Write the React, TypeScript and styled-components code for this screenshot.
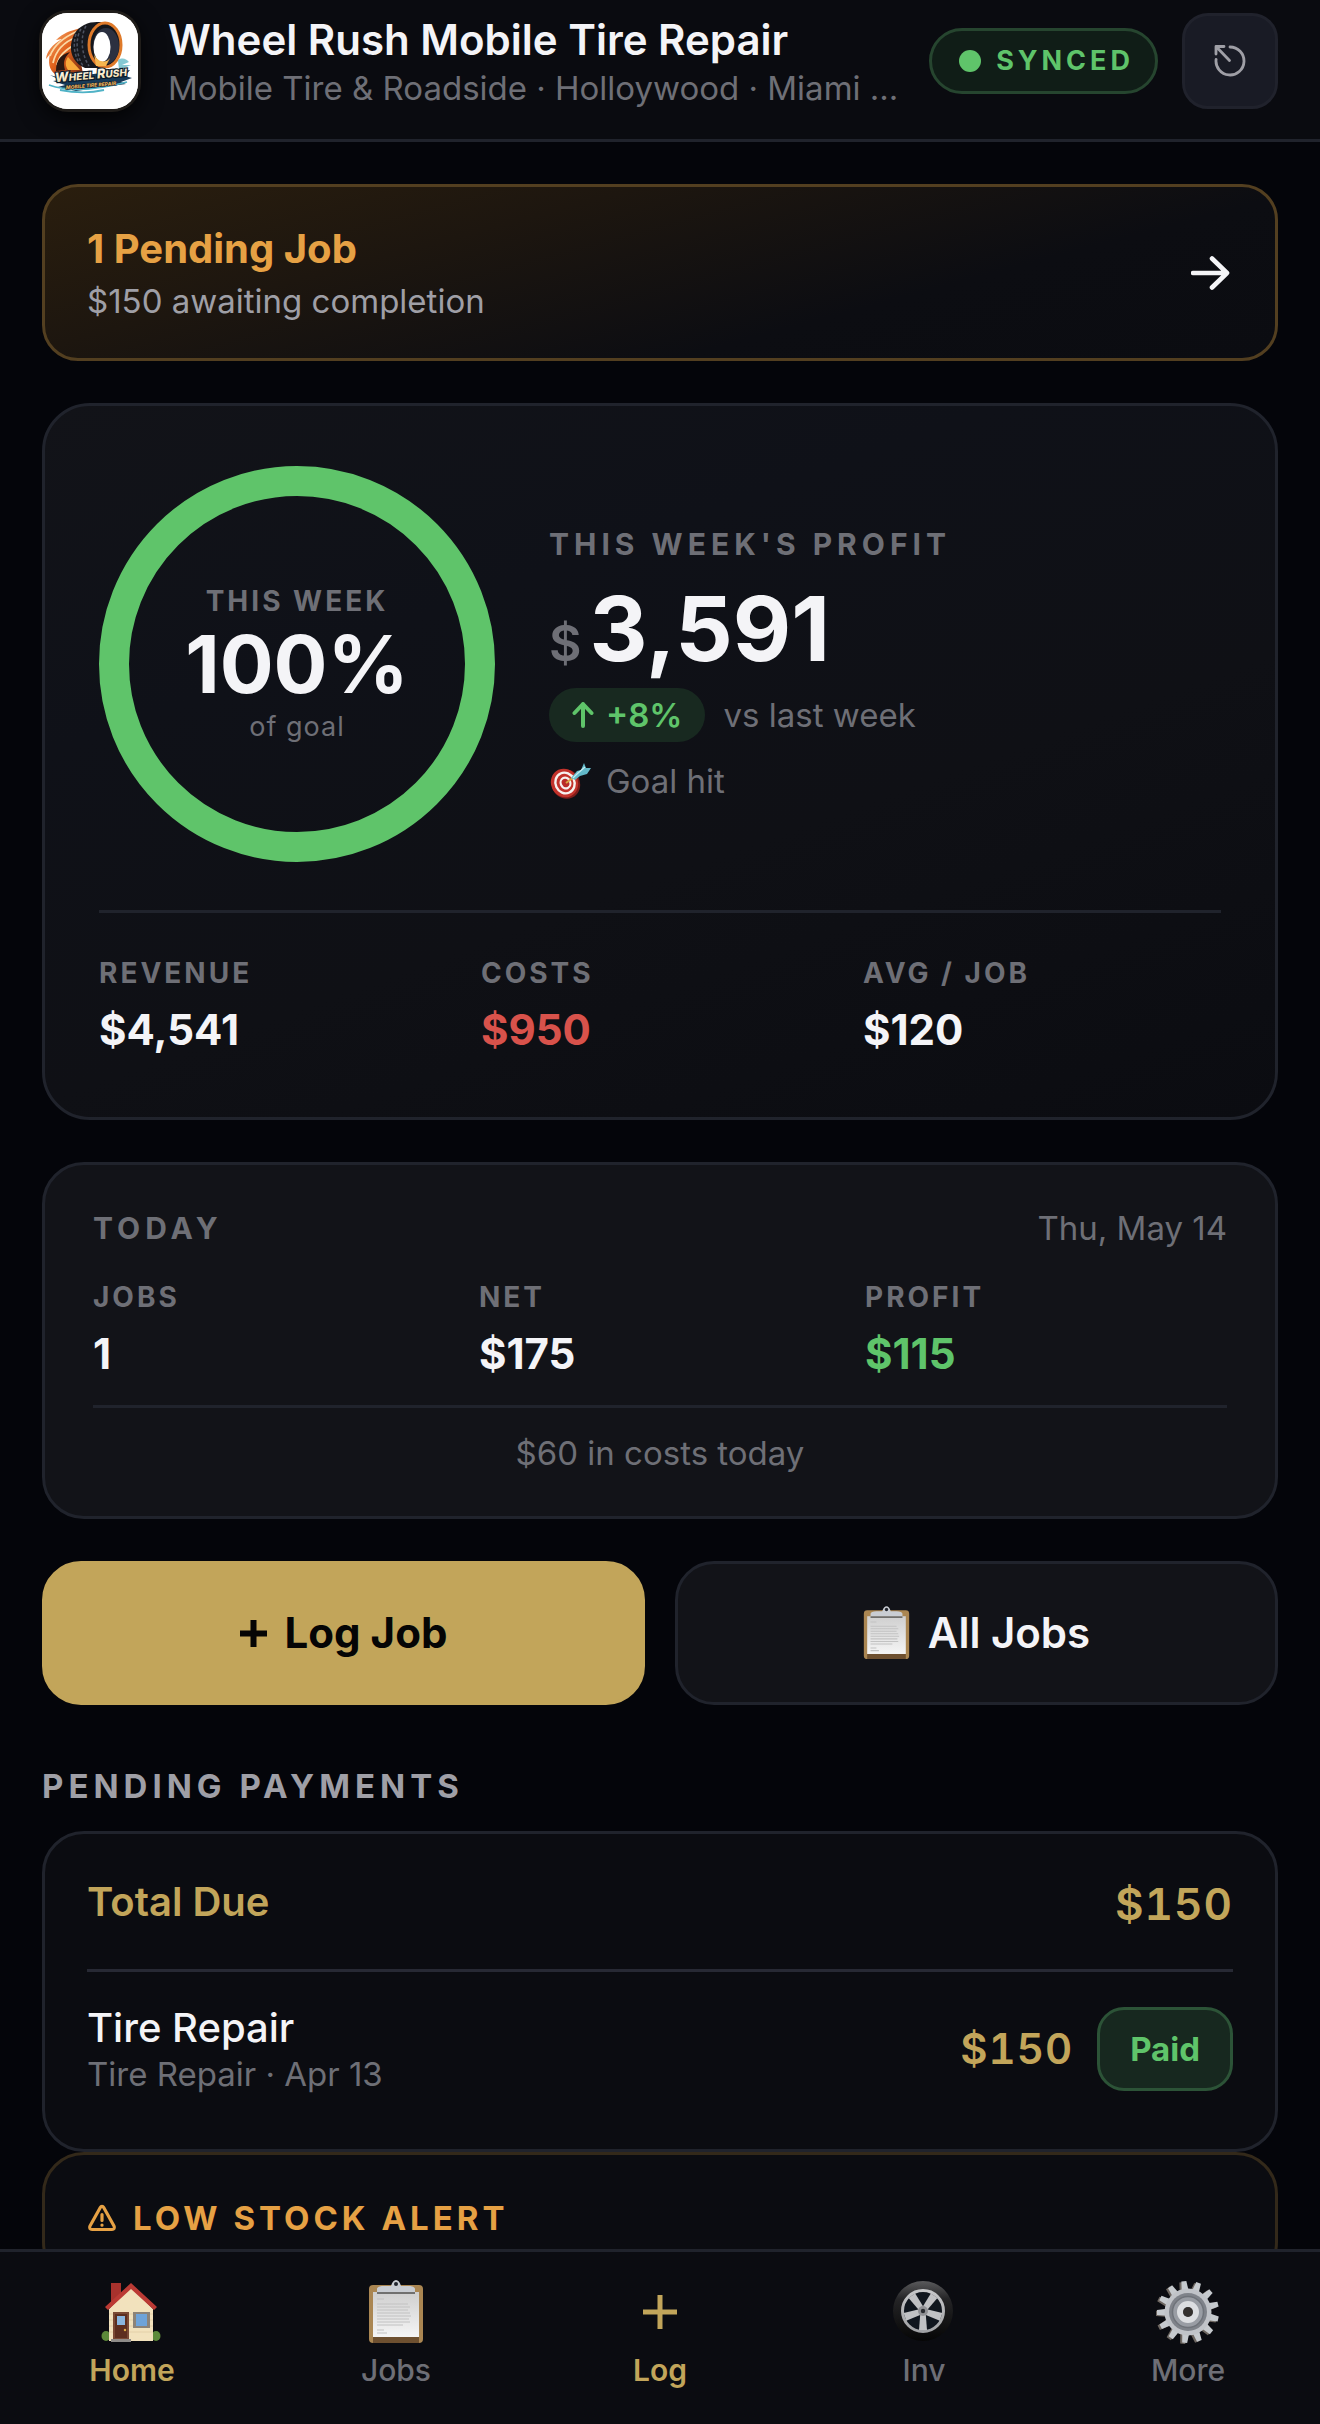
import React from 'react';
import styled, { createGlobalStyle } from 'styled-components';

const c = {
  page: '#04050a',
  bar: '#0a0b10',
  card: '#0b0c11',
  raised: '#121318',
  line: '#20232c',
  text: '#f4f4f7',
  soft: '#9f9fa6',
  muted: '#6e6f76',
  gold: '#c2a55a',
  orange: '#e6a144',
  green: '#5fc46a',
  red: '#d8524b',
};

const GlobalStyle = createGlobalStyle`
  *, *::before, *::after { box-sizing: border-box; }
  body {
    margin: 0;
    background: ${c.page};
    color: ${c.text};
    font-family: Inter, "Liberation Sans", sans-serif;
    font-size: 33px;
    line-height: 42px;
  }
  h1, h2, p, dl, dt, dd, ul { margin: 0; padding: 0; font: inherit; }
  button { font: inherit; color: inherit; cursor: pointer; margin: 0; }
  a { color: inherit; text-decoration: none; }
  svg { display: block; flex: none; }
`;

const Shell = styled.div`
  display: flex;
  flex-direction: column;
  height: 100vh;
`;

const Header = styled.header`
  display: flex;
  align-items: center;
  gap: 24px;
  padding: 13px 42px 30px;
  background: ${c.bar};
  border-bottom: 3px solid ${c.line};
`;

const LogoFrame = styled.div`
  width: 96px;
  height: 96px;
  margin-right: 6px;
  flex: none;
  border-radius: 26px;
  overflow: hidden;
  background: #fff;
  box-shadow: 0 0 0 3px #201d1a, 0 6px 24px #000;
`;

const Brand = styled.div`
  flex: 1;
  min-width: 0;
`;

const BrandName = styled.h1`
  font-size: 42px;
  line-height: 54px;
  font-weight: 600;
  white-space: nowrap;
`;

const BrandMeta = styled.p`
  color: ${c.muted};
  white-space: nowrap;
`;

const SyncPill = styled.div`
  display: flex;
  align-items: center;
  gap: 15px;
  height: 66px;
  padding: 0 21px 0 27px;
  border: 3px solid #26452f;
  border-radius: 33px;
  background: #101d17;
  color: ${c.green};
  font-size: 27px;
  line-height: 36px;
  font-weight: 700;
  letter-spacing: 4px;
`;

const Dot = styled.span`
  width: 22px;
  height: 22px;
  border-radius: 50%;
  background: ${c.green};
`;

const IconButton = styled.button`
  display: grid;
  place-items: center;
  width: 96px;
  height: 96px;
  padding: 0;
  border: 3px solid #20222c;
  border-radius: 26px;
  background: #191b25;
  color: ${c.soft};
`;

const Main = styled.main`
  flex: 1;
  min-height: 0;
  overflow-y: auto;
  scrollbar-width: none;
  display: flex;
  flex-direction: column;
  gap: 42px;
  padding: 42px;
  & > * { flex: none; }
`;

const PendingBanner = styled.a`
  display: flex;
  align-items: center;
  justify-content: space-between;
  padding: 36px 42px;
  border: 3px solid #533f20;
  border-radius: 36px;
  background: linear-gradient(165deg, #2a1e0e 0%, #1d160f 32%, #0c0d12 68%, #0b0c11 100%);
`;

const BannerTitle = styled.p`
  margin-bottom: 6px;
  color: ${c.orange};
  font-size: 40px;
  line-height: 51px;
  font-weight: 700;
`;

const BannerNote = styled.p`
  color: ${c.soft};
`;

const Card = styled.section<{ $tone?: 'raised' | 'hero' | 'alert' }>`
  border: 3px solid ${(p) => (p.$tone === 'alert' ? '#33291a' : c.line)};
  border-radius: ${(p) => (p.$tone === 'hero' ? 48 : 42)}px;
  padding: ${(p) =>
    p.$tone === 'hero' ? '60px 54px' : p.$tone === 'raised' ? '42px 48px' : p.$tone === 'alert' ? '42px' : '24px 42px'};
  background: ${(p) =>
    p.$tone === 'hero'
      ? 'linear-gradient(160deg, #121318 0%, #0f1118 30%, #0f1015 60%, #0b0c11 100%)'
      : p.$tone === 'raised'
        ? c.raised
        : c.card};
`;

const HeroTop = styled.div`
  display: flex;
  align-items: center;
  gap: 54px;
`;

const Ring = styled.div`
  display: flex;
  flex-direction: column;
  align-items: center;
  justify-content: center;
  width: 396px;
  height: 396px;
  flex: none;
  border: 30px solid ${c.green};
  border-radius: 50%;
`;

const Label = styled.dt`
  color: ${c.muted};
  font-size: 28px;
  line-height: 36px;
  font-weight: 700;
  letter-spacing: 3px;
`;

const RingLabel = styled(Label).attrs({ as: 'p' })``;

const RingValue = styled.p`
  font-size: 80px;
  line-height: 90px;
  font-weight: 700;
`;

const RingNote = styled.p`
  color: ${c.muted};
  font-size: 27px;
  line-height: 36px;
  letter-spacing: 1px;
`;

const Heading = styled.h2<{ $tone?: 'soft' | 'alert' }>`
  display: flex;
  align-items: center;
  gap: 16px;
  color: ${(p) => (p.$tone === 'soft' ? c.soft : p.$tone === 'alert' ? c.orange : c.muted)};
  font-size: ${(p) => (p.$tone ? 33 : 30)}px;
  line-height: ${(p) => (p.$tone ? 42 : 36)}px;
  font-weight: 700;
  letter-spacing: ${(p) => (p.$tone === 'alert' ? 4 : 5)}px;
`;

const Amount = styled.p`
  display: flex;
  align-items: baseline;
  gap: 8px;
  margin: 22px 0 14px;
  font-size: 90px;
  line-height: 90px;
  font-weight: 700;
`;

const Currency = styled.span`
  color: ${c.muted};
  font-size: 50px;
  line-height: 50px;
  font-weight: 600;
`;

const Trend = styled.div`
  display: flex;
  align-items: center;
  gap: 18px;
  color: ${c.muted};
`;

const TrendPill = styled.span`
  display: flex;
  align-items: center;
  gap: 12px;
  height: 54px;
  padding: 0 23px;
  border-radius: 27px;
  background: #182920;
  color: ${c.green};
  font-weight: 600;
`;

const GoalLine = styled.p`
  display: flex;
  align-items: center;
  gap: 14px;
  margin-top: 18px;
  color: ${c.muted};
`;

const Stats = styled.dl`
  display: grid;
  grid-template-columns: repeat(3, 1fr);
  gap: 24px;
`;

const HeroStats = styled(Stats)`
  margin-top: 48px;
  padding-top: 42px;
  border-top: 3px solid ${c.line};
`;

const TodayStats = styled(Stats)`
  margin: 30px 0 24px;
`;

const Value = styled.dd<{ $color?: string }>`
  margin-top: 12px;
  color: ${(p) => p.$color ?? c.text};
  font-size: 42px;
  line-height: 54px;
  font-weight: 700;
`;

const TodayHead = styled.div`
  display: flex;
  align-items: center;
  justify-content: space-between;
`;

const Muted = styled.p`
  color: ${c.muted};
`;

const TodayFoot = styled(Muted)`
  padding-top: 24px;
  border-top: 3px solid ${c.line};
  text-align: center;
`;

const Actions = styled.div`
  display: grid;
  grid-template-columns: 1fr 1fr;
  gap: 30px;
`;

const ActionButton = styled.button<{ $primary?: boolean }>`
  display: flex;
  align-items: center;
  justify-content: center;
  gap: 18px;
  height: 144px;
  border: 3px solid ${(p) => (p.$primary ? c.gold : c.line)};
  border-radius: 39px;
  background: ${(p) => (p.$primary ? c.gold : c.raised)};
  color: ${(p) => (p.$primary ? '#050505' : c.text)};
  font-size: 42px;
  line-height: 54px;
  font-weight: ${(p) => (p.$primary ? 700 : 600)};
`;

const PaymentsSection = styled.div`
  display: flex;
  flex-direction: column;
  gap: 24px;
  padding-top: 18px;
`;

const TotalRow = styled.div`
  display: flex;
  align-items: flex-start;
  justify-content: space-between;
  padding: 18px 0 36px;
  border-bottom: 3px solid #272934;
  color: ${c.gold};
`;

const ItemName = styled.p`
  font-size: 40px;
  line-height: 51px;
  font-weight: 500;
`;

const TotalName = styled(ItemName)`
  font-weight: 600;
`;

const Money = styled.p<{ $large?: boolean }>`
  color: ${c.gold};
  font-size: ${(p) => (p.$large ? 44 : 42)}px;
  line-height: 57px;
  font-weight: 600;
  font-variant-numeric: tabular-nums;
  letter-spacing: 1px;
`;

const PaymentRow = styled.div`
  display: flex;
  align-items: center;
  gap: 24px;
  padding: 30px 0;
`;

const PaymentInfo = styled.div`
  flex: 1;
`;

const PaidButton = styled.button`
  height: 84px;
  padding: 0 30px;
  border: 3px solid #2c5337;
  border-radius: 27px;
  background: #17281f;
  color: ${c.green};
  font-weight: 700;
`;

const AlertSlot = styled.div`
  margin-top: -42px;
`;

const Nav = styled.nav`
  display: grid;
  grid-template-columns: repeat(5, 1fr);
  padding: 28px 0 36px;
  border-top: 3px solid ${c.line};
  background: ${c.card};
`;

const NavItem = styled.a<{ $active?: boolean }>`
  display: flex;
  flex-direction: column;
  align-items: center;
  gap: 8px;
  color: ${(p) => (p.$active ? c.gold : c.muted)};
  font-size: 30px;
  line-height: 36px;
  font-weight: ${(p) => (p.$active ? 600 : 500)};
`;

function Logo() {
  return (
    <svg width="96" height="96" viewBox="0 0 96 96" role="img" aria-label="Wheel Rush logo">
      <defs>
        <linearGradient id="flame" x1="0" y1="0" x2="1" y2="1">
          <stop offset="0" stopColor="#f6b67c" />
          <stop offset="0.500" stopColor="#e2621d" />
          <stop offset="1" stopColor="#7a2c12" />
        </linearGradient>
        <linearGradient id="word" x1="0" y1="0" x2="0" y2="1">
          <stop offset="0" stopColor="#fff" />
          <stop offset="1" stopColor="#f3d9a0" />
        </linearGradient>
      </defs>
      <rect width="96" height="96" fill="#fff" />
      <path d="M40 15C26 18 22 20 14 27l6-1C10 32 5 38 4 46l4-5c-2 8-1 16 5 20h28L36 34z" fill="url(#flame)" />
      <path d="M36 18C22 24 12 32 8 43M35 24C24 28 14 36 11 50M33 32c-9 4-16 10-18 20" stroke="#fbd9a5" strokeWidth="1.800" fill="none" />
      <path d="M14 58c0-12 6-17 14-19-6 6-7 10-5 18z" fill="#2b1712" />
      <path d="M26 44c-3 4-3 9 0 13h12z" fill="#f8a83a" />
      <path d="M42 12c8-4 16-3 22-2 10 3 15 12 15 22 0 12-6 21-15 23H43c-10-4-15-13-14-23 1-9 5-16 13-20z" fill="#17181d" />
      <path d="M39 16c-5 8-6 24 2 37M44 13c-5 8-6 26 3 40M34 21c-3 9-2 20 3 29" stroke="#4d5260" strokeWidth="1.500" strokeDasharray="3 2" fill="none" />
      <ellipse cx="63" cy="32" rx="16" ry="22" fill="#15161b" stroke="#df7a2a" strokeWidth="3" />
      <ellipse cx="64" cy="33" rx="13" ry="18" fill="#2b3040" />
      <ellipse cx="60" cy="34" rx="8.500" ry="15" fill="#fff" />
      <path d="M52 41c3 8 12 10 16 4l-4 8H54z" fill="#f6b64f" />
      <path d="M76 47c5-3 8-1 11 2l-7 3h9l-12 5" fill="#86c9d3" />
      <path d="M8 62c10 4 20 2 34 0l46-5-5 6 7 2-11 4 5 2-22 3-28 4-18-4 7-2-12-4 7-1z" fill="#173a58" />
      <path d="M7 72c20 7 48 5 78-3M18 77c15 3 31 3 44 0" stroke="#4fb2c6" strokeWidth="1.800" fill="none" />
      <g transform="rotate(-5 50 64)" fontFamily="Inter, sans-serif" fontStyle="italic" fontWeight="800" stroke="#0c1a2b" paintOrder="stroke">
        <text x="13" y="66" fontSize="13" strokeWidth="2.400" fill="url(#word)">W<tspan fontSize="10">HEEL</tspan> R<tspan fontSize="10">USH</tspan></text>
        <text x="23" y="74" fontSize="5" strokeWidth="1" fill="#eeb45a">MOBILE TIRE REPAIR</text>
      </g>
    </svg>
  );
}

function ResetIcon() {
  return (
    <svg width="32" height="32" viewBox="0 0 32 32" fill="none" stroke="currentColor" strokeWidth="2.800" strokeLinecap="round" strokeLinejoin="round" aria-hidden="true">
      <path d="M16 2a14 14 0 1 1-13.900 12.300" />
      <path d="M15.500 15.500L2.500 2M2 9V1.500h8" />
    </svg>
  );
}

function ArrowRight() {
  return (
    <svg width="42" height="36" viewBox="0 0 42 36" fill="none" stroke={c.text} strokeWidth="4.600" strokeLinecap="round" strokeLinejoin="round" aria-hidden="true">
      <path d="M2 18h34M21 3.500L36 18 21 32.500" />
    </svg>
  );
}

function ArrowUp() {
  return (
    <svg width="22" height="28" viewBox="0 0 22 28" fill="none" stroke="currentColor" strokeWidth="4" strokeLinecap="round" strokeLinejoin="round" aria-hidden="true">
      <path d="M11 25V3M2.500 12L11 3l8.500 9" />
    </svg>
  );
}

function TargetIcon() {
  return (
    <svg width="43" height="38" viewBox="0 0 43 38" aria-hidden="true">
      <ellipse cx="17" cy="22" rx="14" ry="15" fill="#7e1c1a" transform="rotate(-25 17 22)" />
      <ellipse cx="15.500" cy="21" rx="13.500" ry="14.500" fill="#c2322b" transform="rotate(-25 15.500 21)" />
      <ellipse cx="16" cy="21" rx="9.500" ry="10.500" fill="none" stroke="#f7f1ef" strokeWidth="2.400" transform="rotate(-25 16 21)" />
      <ellipse cx="16.500" cy="21" rx="4.800" ry="5.400" fill="#b92c27" stroke="#f7f1ef" strokeWidth="2.200" transform="rotate(-25 16.500 21)" />
      <path d="M17 21l8-6" stroke="#d9a441" strokeWidth="2" />
      <path d="M22 16l6-7 4-1 3-7 2 5 5 0-4 6-7 2-5 4z" fill="#62b9c9" />
      <path d="M28 12l8-7M24 16l6-6" stroke="#c4edf2" strokeWidth="1.300" />
    </svg>
  );
}

function Clipboard({ height }: { height: number }) {
  const id = `sheet${height}`;
  return (
    <svg width={Math.round((height * 56) / 64)} height={height} viewBox="0 0 56 64" aria-hidden="true">
      <defs>
        <linearGradient id={id} x1="0" y1="0" x2="0" y2="1">
          <stop offset="0" stopColor="#cfcfcf" />
          <stop offset="1" stopColor="#f5f5f5" />
        </linearGradient>
      </defs>
      <rect x="1" y="5" width="54" height="58" rx="4" fill="#aa8652" />
      <path d="M5 57h46v6H5z" fill="#6e5030" />
      <rect x="5" y="12" width="46" height="45" fill={`url(#${id})`} />
      <path d="M9 12V9c0-2 3-3 7-3h7c1-4 3-6 5-6s4 2 5 6h7c4 0 7 1 7 3v3z" fill="#c9cdd3" />
      <circle cx="28" cy="4" r="2" fill="#20242c" />
      <path d="M9 12h38v2H9z" fill="#70706f" />
      <path d="M9 19h7M9 24h31M9 27h33M9 30h31M9 33h33M9 36h34M9 39h32M9 42h33M9 45h26M9 50h7M9 53h10" stroke="#c2c2c2" strokeWidth="1.200" />
    </svg>
  );
}

function HouseIcon() {
  return (
    <svg width="64" height="64" viewBox="0 0 64 64" aria-hidden="true">
      <ellipse cx="6" cy="56" rx="4.500" ry="5" fill="#5d8a3a" />
      <ellipse cx="56" cy="56" rx="4.500" ry="5" fill="#5d8a3a" />
      <path d="M11 3h10v16l-10 9z" fill="#a8322d" />
      <path d="M9 29L31 7l22 22v32H9z" fill="#f2e2bd" />
      <path d="M9 34h44M9 40h44M9 46h44M9 52h44" stroke="#dfcda4" strokeWidth="0.800" />
      <path d="M31 3L5 27l3 3L31 9l23 21 3-3z" fill="#bb3a34" />
      <rect x="13" y="32" width="16" height="28" fill="#7a4a35" />
      <rect x="15" y="34" width="12" height="24" fill="#5d2f20" />
      <rect x="17" y="36" width="8" height="9" fill="#8ab6de" />
      <circle cx="25" cy="50" r="1.200" fill="#e0b04a" />
      <rect x="33" y="32" width="17" height="16" fill="#8c8378" />
      <rect x="36" y="34" width="11" height="12" fill="#6fa3d8" />
      <path d="M11 59h20v3H11z" fill="#8e8b88" />
    </svg>
  );
}

function PlusIcon({ size, stroke }: { size: number; stroke: number }) {
  return (
    <svg width={size} height={size} viewBox={`0 0 ${size} ${size}`} stroke="currentColor" strokeWidth={stroke} aria-hidden="true">
      <path d={`M0 ${size / 2}H${size}M${size / 2} 0V${size}`} />
    </svg>
  );
}

const NavPlus = styled.span`
  display: grid;
  place-items: center;
  height: 64px;
`;

function WheelIcon() {
  return (
    <svg width="64" height="64" viewBox="0 0 64 64" aria-hidden="true">
      <defs>
        <linearGradient id="rubber" x1="0" y1="0" x2="0" y2="1">
          <stop offset="0" stopColor="#5a5a5c" />
          <stop offset="0.300" stopColor="#242426" />
          <stop offset="1" stopColor="#060606" />
        </linearGradient>
        <linearGradient id="rim" x1="0" y1="0" x2="0" y2="1">
          <stop offset="0" stopColor="#c6c7c9" />
          <stop offset="1" stopColor="#a0a1a4" />
        </linearGradient>
      </defs>
      <circle cx="31" cy="31" r="30" fill="url(#rubber)" />
      <circle cx="31" cy="31" r="20.500" fill="#10161e" stroke="url(#rim)" strokeWidth="3" />
      {[36, 108, 180, 252, 324].map((a) => (
        <path key={a} d="M28.500 31l-1.500-19h8l-1.500 19z" fill="#c0c1c4" transform={`rotate(${a} 31 31)`} />
      ))}
      <circle cx="31" cy="31" r="5" fill="#909195" />
      <circle cx="31" cy="31" r="2.200" fill="#2a2c31" />
    </svg>
  );
}

function GearIcon() {
  const teeth = Array.from({ length: 13 }, (_, i) => (i * 360) / 13 + 20);
  return (
    <svg width="64" height="64" viewBox="0 0 64 64" aria-hidden="true">
      {teeth.map((a) => (
        <path key={`s${a}`} d="M28.500 11l1-10h5l1 10z" fill="#6d6660" transform={`translate(-2 1) rotate(${a} 32 32)`} />
      ))}
      {teeth.map((a) => (
        <path key={a} d="M28.500 11l1-10h5l1 10z" fill="#c6cace" transform={`rotate(${a} 32 32)`} />
      ))}
      <circle cx="32" cy="32" r="23.500" fill="#c0c3c8" />
      <circle cx="32" cy="32" r="19" fill="#7f838a" />
      <circle cx="32" cy="32" r="15.500" fill="#999da4" stroke="#6f737a" strokeWidth="1.500" />
      <circle cx="32" cy="32" r="8" fill="none" stroke="#dcdee1" strokeWidth="6" />
      <circle cx="32" cy="32" r="5" fill="#33302e" />
    </svg>
  );
}

function WarningIcon() {
  return (
    <svg width="30" height="28" viewBox="0 0 30 28" fill="none" stroke="currentColor" strokeWidth="3.200" strokeLinecap="round" strokeLinejoin="round" aria-hidden="true">
      <path d="M13.300 3.500L3 22c-1 2 0 3.500 2 3.500h20c2 0 3-1.500 2-3.500L16.700 3.500c-.8-1.500-2.600-1.500-3.400 0z" />
      <path d="M15 10.500v6M15 21v.2" />
    </svg>
  );
}

function Stat({ label, value, color }: { label: string; value: string; color?: string }) {
  return (
    <div>
      <Label>{label}</Label>
      <Value $color={color}>{value}</Value>
    </div>
  );
}

export default function App() {
  return (
    <Shell>
      <GlobalStyle />
      <Header>
        <LogoFrame>
          <Logo />
        </LogoFrame>
        <Brand>
          <BrandName>Wheel Rush Mobile Tire Repair</BrandName>
          <BrandMeta>Mobile Tire &amp; Roadside · Holloywood · Miami ...</BrandMeta>
        </Brand>
        <SyncPill role="status">
          <Dot />
          SYNCED
        </SyncPill>
        <IconButton type="button" aria-label="Refresh">
          <ResetIcon />
        </IconButton>
      </Header>

      <Main>
        <PendingBanner href="#jobs">
          <div>
            <BannerTitle>1 Pending Job</BannerTitle>
            <BannerNote>$150 awaiting completion</BannerNote>
          </div>
          <ArrowRight />
        </PendingBanner>

        <Card $tone="hero">
          <HeroTop>
            <Ring>
              <RingLabel>THIS WEEK</RingLabel>
              <RingValue>100%</RingValue>
              <RingNote>of goal</RingNote>
            </Ring>
            <div>
              <Heading>THIS WEEK'S PROFIT</Heading>
              <Amount>
                <Currency>$</Currency>3,591
              </Amount>
              <Trend>
                <TrendPill>
                  <ArrowUp />
                  +8%
                </TrendPill>
                vs last week
              </Trend>
              <GoalLine>
                <TargetIcon />
                Goal hit
              </GoalLine>
            </div>
          </HeroTop>
          <HeroStats>
            <Stat label="REVENUE" value="$4,541" />
            <Stat label="COSTS" value="$950" color={c.red} />
            <Stat label="AVG / JOB" value="$120" />
          </HeroStats>
        </Card>

        <Card $tone="raised">
          <TodayHead>
            <Heading>TODAY</Heading>
            <Muted>Thu, May 14</Muted>
          </TodayHead>
          <TodayStats>
            <Stat label="JOBS" value="1" />
            <Stat label="NET" value="$175" />
            <Stat label="PROFIT" value="$115" color={c.green} />
          </TodayStats>
          <TodayFoot>$60 in costs today</TodayFoot>
        </Card>

        <Actions>
          <ActionButton type="button" $primary>
            <PlusIcon size={27} stroke={6} />
            Log Job
          </ActionButton>
          <ActionButton type="button">
            <Clipboard height={54} />
            All Jobs
          </ActionButton>
        </Actions>

        <PaymentsSection>
          <Heading $tone="soft">PENDING PAYMENTS</Heading>
          <Card>
            <TotalRow>
              <TotalName>Total Due</TotalName>
              <Money $large>$150</Money>
            </TotalRow>
            <PaymentRow>
              <PaymentInfo>
                <ItemName>Tire Repair</ItemName>
                <Muted>Tire Repair · Apr 13</Muted>
              </PaymentInfo>
              <Money>$150</Money>
              <PaidButton type="button">Paid</PaidButton>
            </PaymentRow>
          </Card>
        </PaymentsSection>

        <AlertSlot>
          <Card $tone="alert">
            <Heading $tone="alert">
              <WarningIcon />
              LOW STOCK ALERT
            </Heading>
          </Card>
        </AlertSlot>
      </Main>

      <Nav aria-label="Primary">
        <NavItem href="#home" $active aria-current="page">
          <HouseIcon />
          Home
        </NavItem>
        <NavItem href="#jobs">
          <Clipboard height={64} />
          Jobs
        </NavItem>
        <NavItem href="#log" $active>
          <NavPlus>
            <PlusIcon size={34} stroke={5} />
          </NavPlus>
          Log
        </NavItem>
        <NavItem href="#inventory">
          <WheelIcon />
          Inv
        </NavItem>
        <NavItem href="#more">
          <GearIcon />
          More
        </NavItem>
      </Nav>
    </Shell>
  );
}
